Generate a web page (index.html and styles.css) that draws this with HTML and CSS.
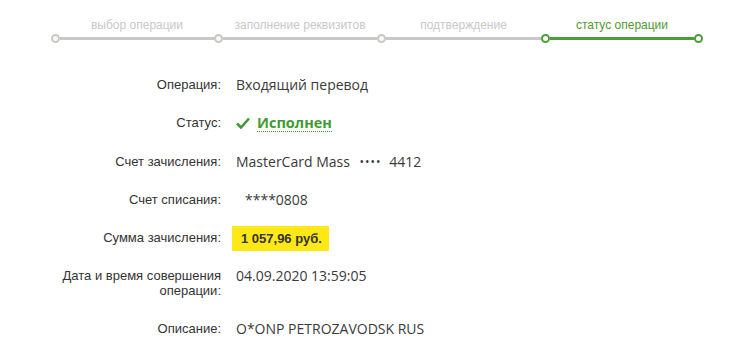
FILE: index.html
```html
<!DOCTYPE html>
<html lang="ru">
<head>
  <meta charset="UTF-8">
  <title>Статус операции</title>
  <link rel="stylesheet" href="styles.css">
</head>
<body>
  <div class="steps">
    <div class="step">
      <div class="step-title">выбор операции</div>
      <div class="step-bar"><span class="dot"></span><span class="line"></span></div>
    </div>
    <div class="step">
      <div class="step-title">заполнение реквизитов</div>
      <div class="step-bar"><span class="dot"></span><span class="line"></span></div>
    </div>
    <div class="step">
      <div class="step-title">подтверждение</div>
      <div class="step-bar"><span class="dot"></span><span class="line"></span></div>
    </div>
    <div class="step step-active">
      <div class="step-title">статус операции</div>
      <div class="step-bar"><span class="dot"></span><span class="line"></span><span class="dot"></span></div>
    </div>
  </div>

  <div class="details">
    <div class="label">Операция:</div>
    <div class="value">Входящий перевод</div>

    <div class="label">Статус:</div>
    <div class="value">
      <span class="status">
        <svg class="check" width="14" height="12" viewBox="0 0 14 12">
          <path d="M1 6.5 L5 10.5 L13 1.5" fill="none" stroke="#3f9a34" stroke-width="2.6"/>
        </svg>
        <span class="status-text">Исполнен</span>
      </span>
    </div>

    <div class="label">Счет зачисления:</div>
    <div class="value">MasterCard Mass <span class="mask">&bull;&bull;&bull;&bull;</span> 4412</div>

    <div class="label">Счет списания:</div>
    <div class="value card-from">****0808</div>

    <div class="label">Сумма зачисления:</div>
    <div class="value"><span class="amount">1 057,96 руб.</span></div>

    <div class="label tight">Дата и время совершения операции:</div>
    <div class="value tight">04.09.2020 13:59:05</div>

    <div class="label">Описание:</div>
    <div class="value">O*ONP PETROZAVODSK RUS</div>
  </div>
</body>
</html>
```

FILE: styles.css
```css
body {
  margin: 8px;
  font-family: "Liberation Sans", Arial, sans-serif;
  font-size: 13px;
  color: #333;
  background: #fff;
}

.steps {
  display: grid;
  grid-template-columns: 163px 163px 164px 162px;
  margin: 10px 0 0 43px;
}
.step-title {
  font-size: 12px;
  line-height: 14px;
  color: #c8c8c8;
  text-align: center;
  padding-left: 9px;
  white-space: nowrap;
}
.step-active .step-title {
  color: #4f9b33;
  padding-right: 9px;
}
.step-bar {
  display: flex;
  align-items: center;
  height: 11px;
  margin-top: 1px;
}
.dot {
  box-sizing: border-box;
  width: 9px;
  height: 9px;
  border: 2px solid #c9c8c3;
  border-radius: 50%;
  background: #f7f7f5;
  flex: none;
}
.line {
  flex: 1;
  height: 3px;
  background: #c8c8c8;
}
.step-active .dot {
  border-color: #4a9d38;
  background: #fff;
}
.step-active .line {
  background: #4a9d38;
}

.details {
  display: grid;
  grid-template-columns: 160px auto;
  column-gap: 15px;
  margin: 22px 0 0 53px;
}
.label,
.value {
  padding: 10px 0;
}
.label {
  text-align: right;
  line-height: 15px;
  padding-top: 11px;
  padding-bottom: 12px;
}
.value {
  font-family: "Open Sans", "Liberation Sans", sans-serif;
  font-size: 14px;
  line-height: 18px;
  color: #3a3a3a;
}
.label.tight {
  padding-top: 10px;
}
.value.tight {
  padding-top: 9px;
}
.mask {
  font-size: 12px;
  letter-spacing: 1px;
  vertical-align: 1px;
  margin: 0 4px 0 6px;
}
.card-from {
  padding-left: 9px;
}
.status {
  display: inline-flex;
  align-items: center;
  gap: 7px;
}
.check {
  margin-top: -1px;
}
.status-text {
  font-weight: bold;
  font-size: 14.5px;
  color: #3f9a34;
  border-bottom: 1px dotted #3f9a34;
  line-height: 17px;
}
.amount {
  font-family: "Liberation Sans", Arial, sans-serif;
  font-weight: bold;
  font-size: 13px;
  color: #333;
  background: #ffe815;
  padding: 5px 7px 5px 9px;
  margin-left: -4px;
}
```
